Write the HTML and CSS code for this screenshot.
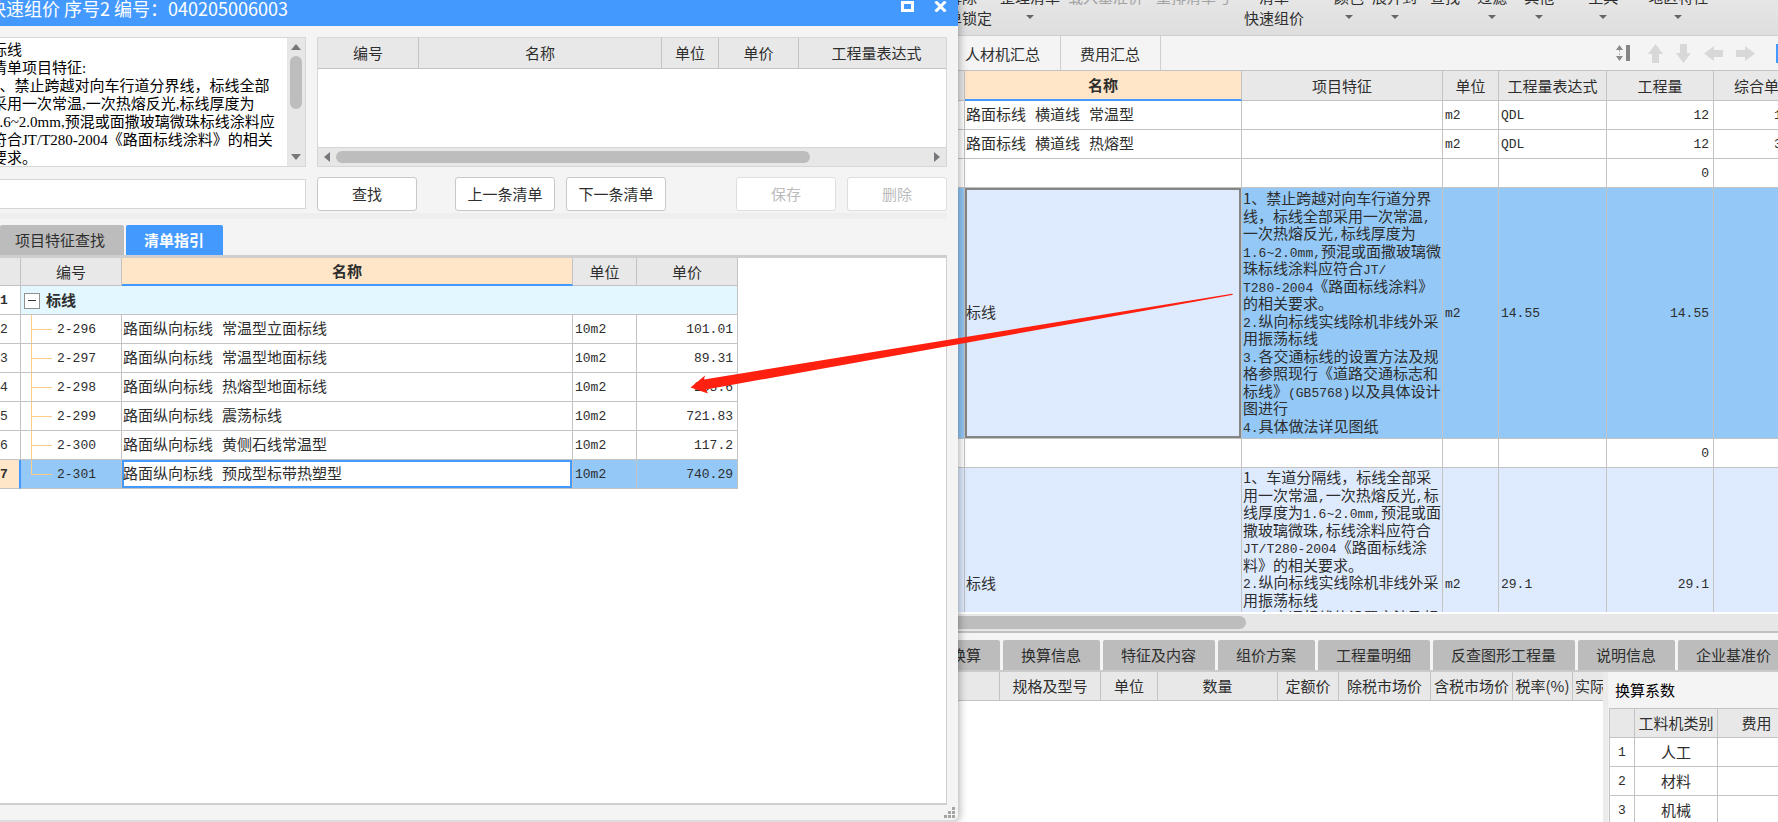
FILE: index.html
```html
<!DOCTYPE html>
<html lang="zh-CN">
<head>
<meta charset="utf-8">
<title>快速组价</title>
<link rel="stylesheet" href="styles.css">
</head>
<body>
<div class="desktop">
  <section class="dialog">
    <header class="titlebar">
      <h1 class="title">快速组价 序号2 编号：040205006003</h1>
      <button class="win-btn" aria-label="最大化"><svg width="13" height="11" viewBox="0 0 13 11"><rect x="1.5" y="1.5" width="10" height="8" fill="none" stroke="#fff" stroke-width="3"/></svg></button>
      <button class="win-btn" aria-label="关闭"><svg width="13" height="11" viewBox="0 0 13 11"><path d="M1.5 0.5L11.5 10.5M11.5 0.5L1.5 10.5" stroke="#fff" stroke-width="3"/></svg></button>
    </header>

    <div class="lookup">
      <div class="feature-box">
        <textarea class="feature-text" aria-label="项目特征" spellcheck="false" wrap="off">标线
清单项目特征:
1、禁止跨越对向车行道分界线，标线全部
采用一次常温,一次热熔反光,标线厚度为
1.6~2.0mm,预混或面撒玻璃微珠标线涂料应
符合JT/T280-2004《路面标线涂料》的相关
要求。</textarea>
        <div class="vbar">
          <svg width="10" height="6" viewBox="0 0 10 6"><path d="M0 6L5 0L10 6Z" fill="#77777c"/></svg>
          <span class="vthumb"></span>
          <svg width="10" height="6" viewBox="0 0 10 6"><path d="M0 0L5 6L10 0Z" fill="#77777c"/></svg>
        </div>
      </div>
      <div class="result-box">
        <table class="grid">
          <colgroup><col class="w101"><col><col class="w57"><col class="w80"><col class="w147"></colgroup>
          <thead><tr class="tall"><th>编号</th><th>名称</th><th>单位</th><th>单价</th><th class="expr">工程量表达式</th></tr></thead>
        </table>
        <div class="result-body"></div>
        <div class="hbar">
          <svg width="6" height="10" viewBox="0 0 6 10"><path d="M6 0L0 5L6 10Z" fill="#77777c"/></svg>
          <span class="hthumb"></span>
          <svg width="6" height="10" viewBox="0 0 6 10"><path d="M0 0L6 5L0 10Z" fill="#77777c"/></svg>
        </div>
      </div>
      <input class="search" type="text" aria-label="查找内容">
      <div class="actions">
        <button class="btn">查找</button>
        <button class="btn prev">上一条清单</button>
        <button class="btn next">下一条清单</button>
        <button class="btn save" disabled>保存</button>
        <button class="btn del" disabled>删除</button>
      </div>
    </div>
    <div class="band"></div>

    <nav class="dlg-tabs">
      <button class="dtab first">项目特征查找</button>
      <button class="dtab on">清单指引</button>
    </nav>
    <div class="guide">
      <table class="grid guide-grid">
        <colgroup><col class="w21"><col class="w101"><col class="w451"><col class="w64"><col class="w101"></colgroup>
        <thead><tr><th></th><th>编号</th><th class="sel-col">名称</th><th>单位</th><th>单价</th></tr></thead>
        <tbody>
          <tr class="group"><td class="no">1</td><td colspan="4"><button class="fold" aria-label="折叠"></button>标线</td></tr>
          <tr><td class="no">2</td><td class="code">2-296</td><td class="name">路面纵向标线 常温型立面标线</td><td class="num">10m2</td><td class="num r">101.01</td></tr>
          <tr><td class="no">3</td><td class="code">2-297</td><td class="name">路面纵向标线 常温型地面标线</td><td class="num">10m2</td><td class="num r">89.31</td></tr>
          <tr><td class="no">4</td><td class="code">2-298</td><td class="name">路面纵向标线 热熔型地面标线</td><td class="num">10m2</td><td class="num r">253.6</td></tr>
          <tr><td class="no">5</td><td class="code">2-299</td><td class="name">路面纵向标线 震荡标线</td><td class="num">10m2</td><td class="num r">721.83</td></tr>
          <tr><td class="no">6</td><td class="code">2-300</td><td class="name">路面纵向标线 黄侧石线常温型</td><td class="num">10m2</td><td class="num r">117.2</td></tr>
          <tr class="current"><td class="no">7</td><td class="code last">2-301</td><td class="name editing">路面纵向标线 预成型标带热塑型</td><td class="num">10m2</td><td class="num r">740.29</td></tr>
        </tbody>
      </table>
    </div>
    <footer class="dlg-foot">
      <svg width="11" height="11" viewBox="0 0 11 11" fill="#a5a5a5"><path d="M8 0h3v3h-3zM4 4h3v3h-3zM8 4h3v3h-3zM0 8h3v3h-3zM4 8h3v3h-3zM8 8h3v3h-3z"/></svg>
    </footer>
  </section>

  <main class="app">
    <div class="ribbon">
      <button class="tool">解除<br>清单锁定</button>
      <button class="tool s1">整理清单<i class="caret"></i></button>
      <button class="tool s1" disabled>载入基准价</button>
      <button class="tool s2" disabled>重排清单号</button>
      <button class="tool s2">清单<br>快速组价</button>
      <button class="tool s4">颜色<i class="caret"></i></button>
      <button class="tool s1">展开到<i class="caret"></i></button>
      <button class="tool s2">查找</button>
      <button class="tool s3">过滤<i class="caret"></i></button>
      <button class="tool s3">其他<i class="caret"></i></button>
      <button class="tool s5">工具<i class="caret"></i></button>
      <button class="tool s4">地区特性<i class="caret"></i></button>
    </div>
    <div class="subtabs">
      <button class="subtab near">人材机汇总</button>
      <button class="subtab">费用汇总</button>
      <div class="movers">
        <svg class="fit" width="14" height="18" viewBox="0 0 14 18"><path d="M0 6L3.500 1L7 6ZM0 12L3.500 17L7 12Z" fill="#8a8a8a"/><path d="M3.500 6V12" stroke="#b5b5b5" stroke-dasharray="2 1"/><rect x="10" y="1" width="4" height="16" fill="#858585"/></svg>
        <svg width="15" height="19" viewBox="0 0 15 19"><path d="M7.500 0L15 10H11V19H4V10H0Z" fill="#d8d8d8"/></svg>
        <svg width="15" height="19" viewBox="0 0 15 19"><path d="M7.500 19L15 9H11V0H4V9H0Z" fill="#d8d8d8"/></svg>
        <svg width="19" height="15" viewBox="0 0 19 15"><path d="M0 7.500L10 0V4H19V11H10V15Z" fill="#d8d8d8"/></svg>
        <svg width="19" height="15" viewBox="0 0 19 15"><path d="M19 7.500L9 0V4H0V11H9V15Z" fill="#d8d8d8"/></svg>
        <i class="blue-edge"></i>
      </div>
    </div>

    <div class="bill">
      <table class="grid bill-grid">
        <colgroup><col class="w7"><col class="w277"><col class="w201"><col class="w56"><col class="w108"><col class="w107"><col class="w101"></colgroup>
        <thead><tr><th></th><th class="sel-col">名称</th><th>项目特征</th><th>单位</th><th>工程量表达式</th><th>工程量</th><th>综合单价</th></tr></thead>
        <tbody>
          <tr><td></td><td class="name">路面标线 横道线 常温型</td><td></td><td class="num">m2</td><td class="num">QDL</td><td class="num r">12</td><td class="num price">15.83</td></tr>
          <tr><td></td><td class="name">路面标线 横道线 热熔型</td><td></td><td class="num">m2</td><td class="num">QDL</td><td class="num r">12</td><td class="num price">35.36</td></tr>
          <tr><td></td><td></td><td></td><td></td><td></td><td class="num r">0</td><td></td></tr>
          <tr class="picked"><td></td><td class="name focus">标线</td>
            <td class="desc"><div>1、禁止跨越对向车行道分界</div><div>线，标线全部采用一次常温<b>,</b></div><div>一次热熔反光<b>,</b>标线厚度为</div><div><b>1.6~2.0mm,</b>预混或面撒玻璃微</div><div>珠标线涂料应符合<b>JT/</b></div><div><b>T280-2004</b>《路面标线涂料》</div><div>的相关要求。</div><div><b>2.</b>纵向标线实线除机非线外采</div><div>用振荡标线</div><div><b>3.</b>各交通标线的设置方法及规</div><div>格参照现行《道路交通标志和</div><div>标线》<b>(GB5768)</b>以及具体设计</div><div>图进行</div><div><b>4.</b>具体做法详见图纸</div></td>
            <td class="num">m2</td><td class="num">14.55</td><td class="num r">14.55</td><td></td></tr>
          <tr><td></td><td></td><td></td><td></td><td></td><td class="num r">0</td><td></td></tr>
          <tr class="item"><td></td><td class="name">标线</td>
            <td class="desc"><div>1、车道分隔线，标线全部采</div><div>用一次常温<b>,</b>一次热熔反光<b>,</b>标</div><div>线厚度为<b>1.6~2.0mm,</b>预混或面</div><div>撒玻璃微珠<b>,</b>标线涂料应符合</div><div><b>JT/T280-2004</b>《路面标线涂</div><div>料》的相关要求。</div><div><b>2.</b>纵向标线实线除机非线外采</div><div>用振荡标线</div><div><b>3.</b>各交通标线的设置方法及规</div><div>格参照现行《道路交通标志和</div><div>标线》<b>(GB5768)</b>以及具体设计</div><div>图进行</div><div><b>4.</b>具体做法详见图纸</div></td>
            <td class="num">m2</td><td class="num">29.1</td><td class="num r">29.1</td><td></td></tr>
        </tbody>
      </table>
    </div>
    <div class="bill-scroll"><span></span></div>

    <nav class="low-tabs">
      <button>标准换算</button><button>换算信息</button><button>特征及内容</button><button>组价方案</button><button>工程量明细</button><button>反查图形工程量</button><button>说明信息</button><button>企业基准价</button>
    </nav>
    <div class="lower">
      <div class="materials">
        <table class="grid">
          <colgroup><col class="w42"><col class="w101"><col class="w57"><col class="w120"><col class="w61"><col class="w92"><col class="w82"><col class="w60"><col class="w82"></colgroup>
          <thead><tr><th></th><th>规格及型号</th><th>单位</th><th>数量</th><th>定额价</th><th>除税市场价</th><th>含税市场价</th><th>税率(%)</th><th class="cut">实际数量</th></tr></thead>
        </table>
      </div>
      <aside class="factor">
        <h2>换算系数</h2>
        <table class="grid factor-grid">
          <colgroup><col class="w25"><col class="w83"><col class="w78"></colgroup>
          <thead><tr><th></th><th>工料机类别</th><th>费用</th></tr></thead>
          <tbody>
            <tr><td class="num">1</td><td>人工</td><td></td></tr>
            <tr><td class="num">2</td><td>材料</td><td></td></tr>
            <tr><td class="num">3</td><td>机械</td><td></td></tr>
          </tbody>
        </table>
      </aside>
    </div>
  </main>

  <svg class="pointer" width="543" height="101" viewBox="690 293 543 101" aria-hidden="true"><path d="M690.500 387.500L705 375.500L704 379.500L1232 293.800Q1234 294 1232 295L706 389.500L708 393.500Z" fill="#ff2010"/></svg>
</div>
</body>
</html>
```
FILE: styles.css
```css
* { box-sizing: border-box; }

body {
  margin: 0;
  font: 15px/20px "Noto Sans CJK SC", sans-serif;
  color: #2e2e2e;
  text-spacing-trim: space-all;
}

button, input, textarea {
  font: inherit;
  color: inherit;
  margin: 0;
  padding: 0;
  border: 0;
  background: none;
  white-space: nowrap;
}

svg { display: block; flex: none; }

.desktop {
  position: relative;
  display: grid;
  grid-template-columns: minmax(0, 958fr) minmax(0, 820fr);
  height: 100vh;
  overflow: hidden;
}

/* shared grids */
.grid {
  table-layout: fixed;
  width: 100%;
  border-collapse: separate;
  border-spacing: 0;
}
.grid th, .grid td {
  height: 29px;
  padding: 0;
  border-right: 1px solid #c3c3c3;
  border-bottom: 1px solid #c3c3c3;
  font-weight: 400;
  white-space: nowrap;
  overflow: hidden;
}
.grid td { background: #fff; }
.grid th { background: #e8e8e8; text-align: center; }
.grid .tall th { height: 31px; }
.grid th.expr { padding-left: 8px; }
.grid th.sel-col {
  background: #ffe6c8;
  border-bottom: 2px solid #4499ff;
  font-weight: 700;
}
.grid td.num {
  padding: 2px 2px 0;
  font: 13px/20px "Liberation Mono", monospace;
}
.grid td.r { text-align: right; padding-right: 4px; }
.grid td.name {
  padding: 3px 1px 0;
  font-family: "Liberation Mono", "Noto Sans CJK SC", monospace;
}
.w7 { width: 7px; } .w21 { width: 21px; } .w25 { width: 25px; } .w42 { width: 42px; }
.w56 { width: 56px; } .w57 { width: 57px; } .w60 { width: 60px; } .w61 { width: 61px; }
.w64 { width: 64px; } .w78 { width: 78px; } .w80 { width: 80px; } .w82 { width: 82px; }
.w83 { width: 83px; } .w92 { width: 92px; } .w101 { width: 101px; } .w107 { width: 107px; }
.w108 { width: 108px; } .w120 { width: 120px; } .w147 { width: 147px; } .w201 { width: 201px; }
.w277 { width: 277px; } .w451 { width: 451px; }

/* dialog */
.dialog {
  position: relative;
  z-index: 1;
  display: flex;
  flex-direction: column;
  min-height: 0;
  background: #f4f4f4;
  border-bottom: 2px solid #dcdcdc;
  border-radius: 0 0 6px 0;
  box-shadow: 1px 0 9px rgba(0, 0, 0, 0.35);
}
.titlebar {
  display: flex;
  align-items: flex-start;
  gap: 20px;
  height: 26px;
  padding-right: 11px;
  background: #4499ff;
}
.title {
  flex: 1;
  margin: 0;
  font-size: 18px;
  line-height: 16px;
  font-weight: 400;
  color: #fff;
  text-indent: -12px;
  white-space: nowrap;
}
.win-btn { padding-top: 1px; }

.lookup {
  display: grid;
  grid-template-columns: 306px minmax(0, 1fr);
  grid-template-rows: 130px 34px;
  gap: 10px 11px;
  align-items: center;
  padding: 11px 11px 2px 0;
}
.feature-box {
  display: flex;
  height: 130px;
  border: 1px solid #d6d6d6;
  border-left: 0;
  background: #fff;
  overflow: hidden;
}
.feature-text {
  flex: 1;
  min-width: 0;
  margin-left: -8px;
  padding: 3px 0 0;
  font: 15px/18px "Liberation Serif", "Noto Sans CJK SC", serif;
  color: #000;
  white-space: pre;
  resize: none;
  outline: 0;
  overflow: hidden;
}
.vbar {
  display: flex;
  flex-direction: column;
  align-items: center;
  width: 18px;
  padding: 6px 0;
  background: #e7e7e7;
}
.vthumb { width: 12px; height: 53px; margin: 6px 0 auto; border-radius: 6px; background: #bdbdbd; }
.result-box {
  display: flex;
  flex-direction: column;
  height: 130px;
  border: 1px solid #d6d6d6;
  background: #fff;
}
.result-box th:last-child { border-right: 0; }
.result-body { flex: 1; }
.hbar {
  display: flex;
  align-items: center;
  gap: 6px;
  height: 19px;
  padding: 0 6px;
  background: #e7e7e7;
  border-top: 1px solid #d6d6d6;
}
.hthumb { width: 474px; height: 12px; margin-right: auto; border-radius: 6px; background: #bdbdbd; }
.search {
  width: 100%;
  height: 30px;
  border: 1px solid #d6d6d6;
  border-left: 0;
  background: #fff;
}
.actions { display: flex; gap: 11px; }
.btn {
  width: 100px;
  height: 34px;
  border: 1px solid #c8c8c8;
  border-radius: 3px;
  background: #fff;
}
.btn:disabled { color: #bbb; border-color: #dedede; }
.prev { margin-left: 27px; }
.save { margin-left: auto; }
.band { height: 6px; margin-right: 11px; background: #eee; }

.dlg-tabs { display: flex; gap: 2px; margin-top: 6px; }
.dtab {
  height: 30px;
  padding: 0 19px 0 18px;
  border-radius: 2px 2px 0 0;
  background: #bcbcbc;
}
.dtab.first { padding-left: 15px; }
.dtab.on { background: #4499ff; color: #fff; font-weight: 700; }
.guide {
  flex: 1;
  min-height: 0;
  margin-right: 11px;
  border: solid #cfcfcf;
  border-width: 3px 1px 2px 0;
  background: #fff;
  overflow: hidden;
}
.guide-grid { width: 738px; }
.guide-grid th { height: 28px; }
.guide-grid .group td { background: #e2f7ff; font-weight: 700; padding-left: 3px; }
.guide-grid td.no, .guide-grid .group td.no {
  padding: 2px 0 0;
  background: #fff;
  font-family: "Liberation Mono", monospace;
  font-size: 13px;
}
.fold {
  position: relative;
  width: 16px;
  height: 16px;
  margin-right: 6px;
  border: 1px solid #8f8f8f;
  background: #fff;
  vertical-align: -2px;
}
.fold::after {
  content: "";
  position: absolute;
  left: 3px;
  right: 3px;
  top: 6px;
  height: 1px;
  background: #333;
}
.grid td.code {
  position: relative;
  padding: 2px 0 0 36px;
  font: 13px/20px "Liberation Mono", monospace;
}
.code::before, .code::after {
  content: "";
  position: absolute;
  left: 10px;
  background: #ffcc88;
}
.code::before { top: 0; width: 1px; height: 29px; }
.code::after { top: 14px; width: 21px; height: 1px; }
.code.last::before { height: 14px; }
.grid .current td { background: #93c8f7; }
.grid .current td.no { background: #ffe6c8; border-right: 2px solid #4499ff; font-weight: 700; }
.grid .current td.editing { background: #fff; box-shadow: inset 0 0 0 2px #4499ff; }
.dlg-foot { display: flex; justify-content: flex-end; padding: 2px 3px 2px 0; }

/* main application */
.app {
  display: flex;
  flex-direction: column;
  min-width: 0;
  min-height: 0;
  background: #fff;
  overflow: hidden;
}
.ribbon {
  display: flex;
  align-items: flex-start;
  height: 36px;
  background: linear-gradient(#e6e6e6, #dedede);
  border-bottom: 1px solid #cfcfcf;
  overflow: hidden;
}
.tool { flex: none; margin-top: -14px; line-height: 21px; text-align: center; }
.tool:first-child { margin-left: -26px; }
.tool:disabled { color: #a3a3a3; }
.s1 { margin-left: 8px; } .s2 { margin-left: 13px; } .s3 { margin-left: 17px; }
.s4 { margin-left: 30px; } .s5 { margin-left: 34px; }
.caret {
  display: block;
  width: 8px;
  margin: 8px auto 0;
  border: 4px solid transparent;
  border-top-color: #666;
  border-bottom: 0;
}
.subtabs { display: flex; height: 35px; background: #f4f4f4; border-bottom: 1px solid #c3c3c3; }
.subtab { padding: 2px 20px 0 19px; border-right: 1px solid #cfcfcf; }
.subtab.near { padding-left: 7px; }
.movers { display: flex; align-items: center; gap: 13px; margin-left: auto; }
.fit { margin-right: 5px; }
.blue-edge { width: 2px; height: 19px; margin-left: 8px; background: #4499ff; }

.bill { flex: 1; min-height: 0; overflow: hidden; }
.bill-grid { width: 857px; }
.bill-grid th { height: 30px; }
.bill-grid td.price { padding-left: 60px; }
.grid .picked td { height: 251px; background: #93c8f7; }
.grid .item td { height: 232px; background: #deebff; }
.grid .picked td.focus { background: #deebff; box-shadow: inset 0 0 0 2px #858585; }
.grid td.desc { padding: 0 0 4px 1px; overflow: visible; }
.desc div { line-height: 18px; height: 18px; }
.desc div:nth-child(even) { line-height: 17px; height: 17px; }
.desc b { font: 13px "Liberation Mono", monospace; }
.bill-scroll {
  height: 21px;
  padding: 4px 0 2px;
  background: #e7e7e7;
  border-bottom: 2px solid #c0c0c0;
  box-shadow: inset 0 2px 0 #fff;
}
.bill-scroll span { display: block; width: 288px; height: 13px; border-radius: 0 7px 7px 0; background: #bdbdbd; }

.low-tabs {
  display: flex;
  gap: 3px;
  height: 39px;
  padding-top: 7px;
  background: #f4f4f4;
  border-bottom: 2px solid #cbcbcb;
}
.low-tabs button { flex: none; padding: 0 19px 0 18px; border-radius: 2px 2px 0 0; background: #bcbcbc; }
.low-tabs button:first-child { margin-left: -55px; }

.lower { display: flex; height: 150px; }
.materials { flex: 1; min-width: 0; overflow: hidden; }
.materials .grid { width: 697px; }
.grid th.cut { text-align: left; padding-left: 2px; }
.factor { width: 175px; padding-left: 1px; background: #f4f4f4; border-left: 5px solid #ebebeb; overflow: hidden; }
.factor h2 { margin: 0; padding: 8px 6px; font-size: 15px; line-height: 20px; font-weight: 400; color: #000; }
.factor-grid { width: 186px; border-top: 1px solid #c3c3c3; border-left: 1px solid #c3c3c3; }
.factor-grid td, .grid.factor-grid td.num { text-align: center; }

.pointer { position: absolute; left: 690px; top: 293px; pointer-events: none; z-index: 2; }
```
